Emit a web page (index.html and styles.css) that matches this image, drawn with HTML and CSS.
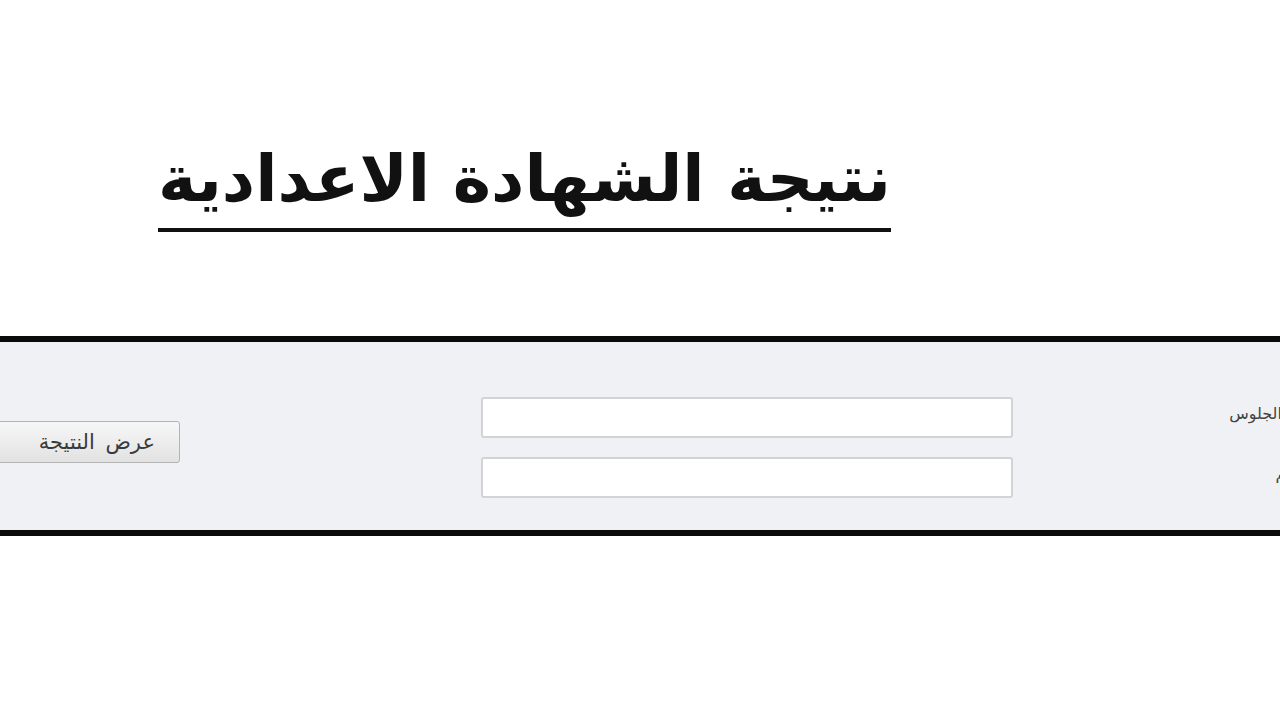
FILE: index.html
```
<!DOCTYPE html>
<html lang="ar">
<head>
    <meta charset="UTF-8">
    <meta name="viewport" content="width=device-width, initial-scale=1.0">
    <title>نتيجة الشهادة الاعدادية</title>
    <link rel="stylesheet" href="styles.css">
</head>
<body>

    <!-- العنوان -->
    <div class="head">
        <h1 class="title">نتيجة الشهادة الاعدادية</h1>
    </div>

    <!-- نموذج البحث -->
    <form class="search" onsubmit="return false;">
        <label class="lbl" for="seat">رقم الجلوس</label>
        <input class="field" id="seat" type="text">
        <button class="btn" type="submit">عرض النتيجة</button>
        <label class="lbl" for="name">الاسم</label>
        <input class="field" id="name" type="text">
    </form>

</body>
</html>
```
FILE: styles.css
```
body {
    margin: 0;
    background: #fff;
    overflow: hidden;
    font-family: "DejaVu Sans", sans-serif;
}

.head {
    padding-top: 134px;
    padding-left: 158px;
    height: 236px;
    box-sizing: border-box;
}

.title {
    display: inline-block;
    margin: 0;
    padding-bottom: 4px;
    font-size: 65px;
    font-weight: bold;
    color: #111;
    line-height: 90px;
    border-bottom: 4px solid #111;
    direction: rtl;
}

/* الشريط الرمادي */
.search {
    direction: rtl;
    margin: 100px -30px 0 -30px;
    padding: 55px 0 0 20px;
    box-sizing: border-box;
    height: 200px;
    background: #eff1f5;
    border-top: 6px solid #0a0a0a;
    border-bottom: 6px solid #0a0a0a;
    display: grid;
    grid-template-columns: 297px 532px 1fr;
    grid-template-rows: 41px 41px;
    row-gap: 19px;
}

.lbl {
    font-family: "DejaVu Sans", sans-serif;
    font-size: 16px;
    color: #444;
    text-align: right;
    align-self: center;
    margin-top: -8px;
    margin-right: -3px;
}

.field {
    height: 41px;
    box-sizing: border-box;
    border: 2px solid #d2d3d6;
    border-radius: 3px;
    background: #fff;
}

.btn {
    grid-row: 1 / span 2;
    grid-column: 3;
    justify-self: end;
    align-self: center;
    margin-bottom: 12px;
    width: 190px;
    height: 42px;
    border: 1px solid #b4b4b4;
    border-radius: 3px;
    background: linear-gradient(#f7f7f7, #e2e2e2);
    font-family: "DejaVu Sans", sans-serif;
    font-size: 21px;
    word-spacing: 4px;
    color: #3a3a3a;
    text-align: right;
    white-space: nowrap;
    overflow: hidden;
    padding: 0 24px 0 0;
}
```
